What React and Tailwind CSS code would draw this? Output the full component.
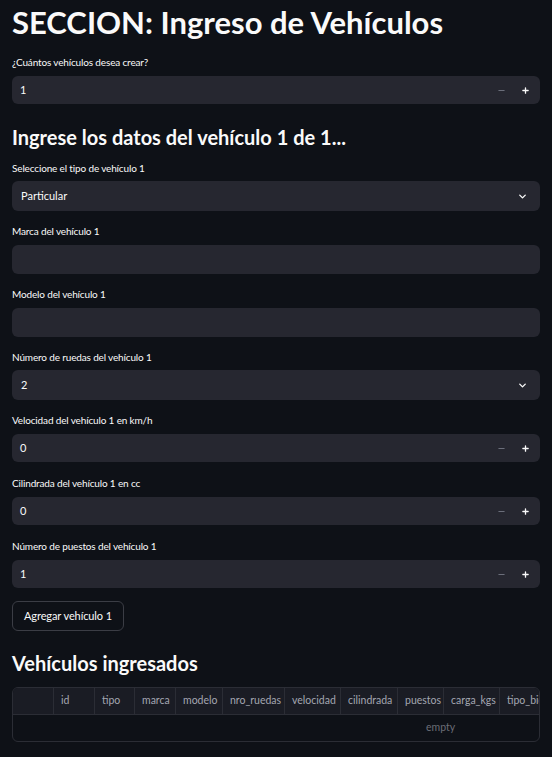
import { ChevronDown, Minus, Plus } from 'lucide-react';

const FONT = { fontFamily: 'Lato, "Noto Sans", sans-serif' };

function Label({ children, className = '' }) {
  return (
    <div className={`h-[14px] text-[10px] leading-[14px] font-normal text-[#fafafa] tracking-[-0.15px] ${className}`}>
      {children}
    </div>
  );
}

function NumberInput({ value }) {
  return (
    <div className="mt-[7px] h-[28px] rounded-[6px] bg-[#262730] flex items-center pl-[8px] pr-[10px]">
      <span className="flex-1 text-[11px] text-[#fafafa]">{value}</span>
      <Minus size={9} strokeWidth={3} className="text-[#6b6e7a] mr-[15px]" />
      <Plus size={9} strokeWidth={3.5} className="text-[#fafafa]" />
    </div>
  );
}

function SelectBox({ value }) {
  return (
    <div className="mt-[6px] h-[30px] rounded-[6px] bg-[#262730] flex items-center pl-[9px] pr-[12px]">
      <span className="flex-1 text-[11px] text-[#fafafa]">{value}</span>
      <ChevronDown size={11} strokeWidth={3} className="text-[#fafafa]" />
    </div>
  );
}

function TextBox() {
  return <div className="mt-[7px] h-[29px] rounded-[6px] bg-[#262730]" />;
}

const columns = [
  { name: '', w: 'w-[41px]' },
  { name: 'id', w: 'w-[41px]' },
  { name: 'tipo', w: 'w-[40px]' },
  { name: 'marca', w: 'w-[41px]' },
  { name: 'modelo', w: 'w-[47px]' },
  { name: 'nro_ruedas', w: 'w-[62px]' },
  { name: 'velocidad', w: 'w-[56px]' },
  { name: 'cilindrada', w: 'w-[57px]' },
  { name: 'puestos', w: 'w-[46px]' },
  { name: 'carga_kgs', w: 'w-[56px]' },
  { name: 'tipo_bicicleta', w: 'w-[70px]' },
];

export default function App() {
  return (
    <div className="min-h-[757px] w-full bg-[#0e1117] text-[#fafafa] px-[12px]" style={FONT}>
      <h1 className="pt-[6px] h-[46px] text-[31px] leading-[32px] font-bold whitespace-nowrap">
        SECCION: Ingreso de Vehículos
      </h1>

      <Label className="mt-[9px]">¿Cuántos vehículos desea crear?</Label>
      <NumberInput value="1" />

      <h3 className="mt-[19px] h-[28px] text-[20px] leading-[28px] font-bold">
        Ingrese los datos del vehículo 1 de 1...
      </h3>

      <Label className="mt-[10px]">Seleccione el tipo de vehículo 1</Label>
      <SelectBox value="Particular" />

      <Label className="mt-[13px]">Marca del vehículo 1</Label>
      <TextBox />

      <Label className="mt-[13px]">Modelo del vehículo 1</Label>
      <TextBox />

      <Label className="mt-[13px]">Número de ruedas del vehículo 1</Label>
      <SelectBox value="2" />

      <Label className="mt-[13px]">Velocidad del vehículo 1 en km/h</Label>
      <NumberInput value="0" />

      <Label className="mt-[14px]">Cilindrada del vehículo 1 en cc</Label>
      <NumberInput value="0" />

      <Label className="mt-[14px]">Número de puestos del vehículo 1</Label>
      <NumberInput value="1" />

      <button className="mt-[13px] h-[30px] px-[11px] rounded-[6px] border border-[#3b3d45] text-[11px] text-[#fafafa] tracking-[-0.1px]">
        Agregar vehículo 1
      </button>

      <h3 className="mt-[18px] h-[28px] text-[20px] leading-[28px] font-bold">
        Vehículos ingresados
      </h3>

      <div className="mt-[10px] h-[55px] rounded-[6px] border border-[#2b2d35] overflow-hidden">
        <div className="flex h-[27px] bg-[#1a1c24] border-b border-[#2b2d35] whitespace-nowrap">
          {columns.map((c, i) => (
            <div
              key={i}
              className={`${c.w} shrink-0 h-full flex items-center pl-[7px] text-[10.5px] text-[#a3a6b1] ${i < columns.length - 1 ? 'border-r border-[#2b2d35]' : ''}`}
            >
              {c.name}
            </div>
          ))}
        </div>
        <div className="h-[26px] flex items-center pl-[413px] text-[10.5px] text-[#6b6d76]">empty</div>
      </div>
    </div>
  );
}
